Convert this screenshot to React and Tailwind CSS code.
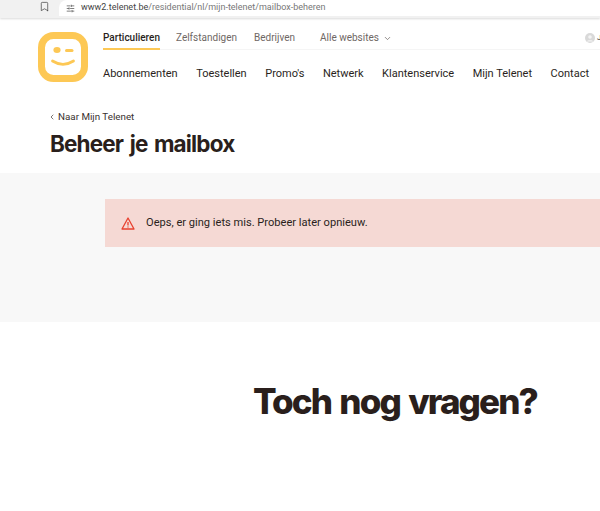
import React from "react";
import { Bookmark, ChevronDown, ChevronLeft, SlidersHorizontal } from "lucide-react";

const font = "font-['Inter','Liberation_Sans',sans-serif]";
const small = "font-['Roboto','Liberation_Sans',sans-serif]";
const mainLinks = ["Abonnementen", "Toestellen", "Promo's", "Netwerk", "Klantenservice", "Mijn Telenet", "Contact"];

function Logo() {
  return (
    <svg width="50" height="50" viewBox="0 0 50 50" className="shrink-0">
      <rect x="3.5" y="3.5" width="43" height="43" rx="12" fill="#fff" stroke="#fdc855" strokeWidth="7" />
      <ellipse cx="19" cy="18" rx="3.6" ry="3" fill="#fdc855" />
      <path d="M28.5 18.5h5.5" stroke="#fdc855" strokeWidth="3" strokeLinecap="round" />
      <path d="M14.5 29c7 4.4 14 4.4 21 0" fill="none" stroke="#fdc855" strokeWidth="2.8" strokeLinecap="round" />
    </svg>
  );
}

function Avatar() {
  return (
    <svg width="10" height="10" viewBox="0 0 10 10" className="ml-auto shrink-0 mt-[1px]">
      <circle cx="5" cy="5" r="5" fill="#d9d9d9" />
      <circle cx="5" cy="4" r="1.8" fill="#f4f4f4" />
      <path d="M1.8 8.4c.7-1.6 5.7-1.6 6.4 0" fill="#f4f4f4" />
    </svg>
  );
}

export default function App() {
  return (
    <div className={`${font} w-[600px] h-[511px] overflow-hidden bg-white text-[#2a1f1c]`}>
      {/* browser bar */}
      <div className="flex h-[18px] bg-[#f1f1f1] shadow-[0_1px_2px_rgba(0,0,0,0.15)]">
        <div className="w-[59px] flex justify-end pr-[9px] pt-[1px]">
          <Bookmark size={11} strokeWidth={1.6} className="text-[#444]" />
        </div>
        <div className="flex-1 bg-white rounded-tl-lg flex items-center gap-[6px] pl-[7px] h-[16px]">
          <SlidersHorizontal size={9} className="text-[#555]" />
          <span className={`${small} text-[9px] text-[#777]`}>
            <span className="text-[#444]">www2.telenet.be</span>/residential/nl/mijn-telenet/mailbox-beheren
          </span>
        </div>
      </div>

      {/* site header */}
      <div className="flex pl-[38px] pt-[14px] h-[80px]">
        <Logo />
        <div className={`${small} ml-[15px] flex-1 min-w-0`}>
          <div className="flex items-start h-[18px] border-b border-[#f5f5f5] text-[10px] text-[#6f6764]">
            <span className="w-[57px] h-[18px] leading-[12px] border-b-2 border-[#fdc855] font-medium text-[#2a1f1c]">Particulieren</span>
            <span className="ml-[16px] leading-[12px]">Zelfstandigen</span>
            <span className="ml-[17px] leading-[12px]">Bedrijven</span>
            <span className="ml-[25px] leading-[12px]">Alle websites</span>
            <ChevronDown size={9} className="ml-[4px] mt-[2px]" />
            <Avatar />
            <span className="ml-[2px] w-[3px] leading-[12px] text-[8px] text-[#2a1f1c]">J</span>
          </div>
          <div className="flex gap-[18.5px] pt-[16px] text-[11px] whitespace-nowrap">
            {mainLinks.map((label) => (
              <span key={label}>{label}</span>
            ))}
          </div>
        </div>
      </div>

      {/* page title */}
      <div className="h-[75px] pl-[50px] pt-[12px]">
        <div className={`${small} flex items-center gap-[2px] -ml-[2px] text-[9.8px] text-[#3a3230]`}>
          <ChevronLeft size={8} />
          <span>Naar Mijn Telenet</span>
        </div>
        <h1 className="mt-[5px] text-[22.5px] tracking-[-0.85px] [word-spacing:2px] leading-[28px] font-bold">Beheer je mailbox</h1>
      </div>

      {/* error panel */}
      <div className="h-[149px] bg-[#f8f8f8] pl-[105px] pt-[26px]">
        <div className="flex items-center h-[48px] bg-[#f5d9d4] pl-[16px] gap-[11px]">
          <svg width="14" height="13" viewBox="0 0 14 13" fill="none" stroke="#e8412f" strokeWidth="1.3" strokeLinejoin="round">
            <path d="M7 1 1 12h12L7 1Z" />
            <path d="M7 5v3.6M7 9.6v.8" />
          </svg>
          <span className={`${small} text-[11.1px] text-[#2a1f1c]`}>Oeps, er ging iets mis. Probeer later opnieuw.</span>
        </div>
      </div>

      {/* footer heading */}
      <div className="pl-[253px] pt-[56px]">
        <h2 className="text-[35px] tracking-[-1.9px] [word-spacing:2.5px] leading-[46px] font-extrabold whitespace-nowrap">Toch nog vragen?</h2>
      </div>
    </div>
  );
}
